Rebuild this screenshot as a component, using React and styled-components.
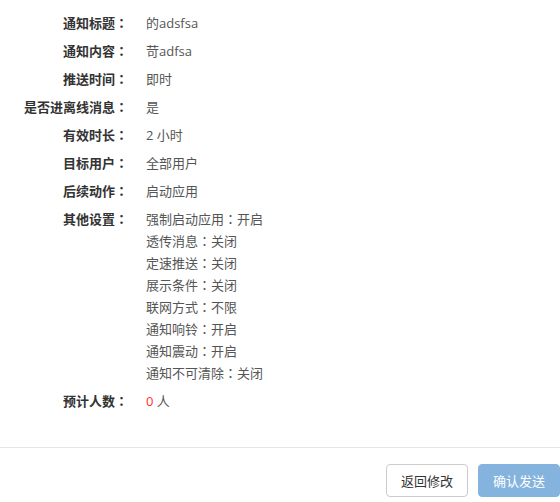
import React from "react";
import styled, { createGlobalStyle } from "styled-components";

const Global = createGlobalStyle`
  html, body { margin: 0; padding: 0; background: #fff; }
  body {
    font-family: "Open Sans", "Noto Sans CJK SC", sans-serif;
    font-size: 13px;
    color: #333;
  }
`;

const Page = styled.div`
  width: 560px;
  height: 502px;
  overflow: hidden;
  display: flex;
  flex-direction: column;
`;

const Body = styled.div`
  padding-top: 12px;
  display: flex;
  flex-direction: column;
  gap: 6px;
  flex: 1;
`;

const Row = styled.div`
  display: flex;
  align-items: flex-start;
  line-height: 22px;
`;

const Label = styled.div`
  width: 128px;
  flex: none;
  text-align: right;
  font-weight: 700;
  color: #333;
  white-space: nowrap;
`;

const Colon = styled.span`
  display: inline-block;
  width: 13px;
  text-align: center;
  font-family: "Noto Sans CJK TC", "Noto Sans CJK SC", sans-serif;
`;

const Value = styled.div`
  margin-left: 18px;
  color: #555;
  display: flex;
  flex-direction: column;
`;

const Setting = styled.span`
  white-space: nowrap;
`;

const Red = styled.span`
  color: #f33;
`;

const Footer = styled.div`
  border-top: 1px solid #e5e5e5;
  padding: 16px 0 5px;
  display: flex;
  justify-content: flex-end;
  gap: 10px;
`;

const Button = styled.button`
  width: 82px;
  height: 33px;
  border-radius: 4px;
  font-family: inherit;
  font-size: 13px;
  padding: 0;
  cursor: pointer;
  border: 1px solid ${(p) => (p.$primary ? "#84b3dd" : "#ccc")};
  background: ${(p) => (p.$primary ? "#84b3dd" : "#fff")};
  color: ${(p) => (p.$primary ? "#fff" : "#333")};
`;

const rows = [
  ["通知标题", "的adsfsa"],
  ["通知内容", "苛adfsa"],
  ["推送时间", "即时"],
  ["是否进离线消息", "是"],
  ["有效时长", "2 小时"],
  ["目标用户", "全部用户"],
  ["后续动作", "启动应用"],
];

const settings = [
  ["强制启动应用", "开启"],
  ["透传消息", "关闭"],
  ["定速推送", "关闭"],
  ["展示条件", "关闭"],
  ["联网方式", "不限"],
  ["通知响铃", "开启"],
  ["通知震动", "开启"],
  ["通知不可清除", "关闭"],
];

const FieldLabel = ({ children }) => (
  <Label>
    {children}
    <Colon>：</Colon>
  </Label>
);

export default function App() {
  return (
    <Page>
      <Global />
      <Body>
        {rows.map(([l, v]) => (
          <Row key={l}>
            <FieldLabel>{l}</FieldLabel>
            <Value>{v}</Value>
          </Row>
        ))}
        <Row>
          <FieldLabel>其他设置</FieldLabel>
          <Value>
            {settings.map(([k, v]) => (
              <Setting key={k}>
                {k}
                <Colon>：</Colon>
                {v}
              </Setting>
            ))}
          </Value>
        </Row>
        <Row>
          <FieldLabel>预计人数</FieldLabel>
          <Value>
            <span>
              <Red>0</Red> 人
            </span>
          </Value>
        </Row>
      </Body>
      <Footer>
        <Button>返回修改</Button>
        <Button $primary>确认发送</Button>
      </Footer>
    </Page>
  );
}
